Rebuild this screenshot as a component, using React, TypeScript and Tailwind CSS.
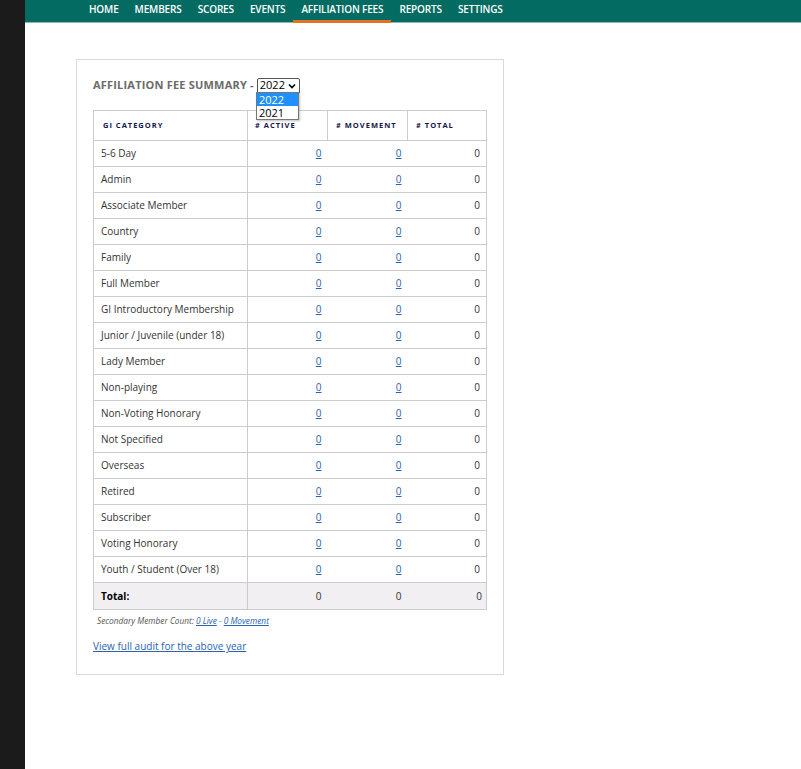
import React from "react";

const rows = [
  "5-6 Day",
  "Admin",
  "Associate Member",
  "Country",
  "Family",
  "Full Member",
  "GI Introductory Membership",
  "Junior / Juvenile (under 18)",
  "Lady Member",
  "Non-playing",
  "Non-Voting Honorary",
  "Not Specified",
  "Overseas",
  "Retired",
  "Subscriber",
  "Voting Honorary",
  "Youth / Student (Over 18)",
];

const nav = ["HOME", "MEMBERS", "SCORES", "EVENTS", "AFFILIATION FEES", "REPORTS", "SETTINGS"];

export default function App() {
  return (
    <div className="flex h-[769px] w-[801px] bg-white" style={{ fontFamily: '"Open Sans", sans-serif' }}>
      <div className="w-[25px] shrink-0 bg-[#1b1b1b]" />
      <div className="flex flex-1 flex-col">
        <div className="flex h-[23px] items-stretch bg-[#046b63] pl-[56px] border-b border-[#8fb9b4]">
          {nav.map((n) => (
            <div
              key={n}
              className="relative flex items-start px-[8px] pt-[2px] text-[10px] font-semibold tracking-[-0.15px] text-white"
            >
              {n}
              {n === "AFFILIATION FEES" && (
                <div className="absolute bottom-[-1px] left-0 right-0 h-[3px] bg-[#e3731e]" />
              )}
            </div>
          ))}
        </div>
        <div className="pl-[51px] pt-[36px]">
          <div className="w-[428px] border border-[#d9d9d9] px-[16px] pb-[20px] pt-[17px]">
            <div className="relative flex h-[17px] items-center">
              <span className="text-[11px] font-bold tracking-[0.2px] text-[#6b6b6b]">AFFILIATION FEE SUMMARY -</span>
              <div className="ml-[3px] flex h-[16px] w-[43px] items-center justify-between rounded-[2px] border border-[#555] bg-white pl-[2px] pr-[3px] text-[11px] text-black">
                <span>2022</span>
                <svg width="8" height="6" viewBox="0 0 8 6">
                  <path d="M1 1.5 L4 4.5 L7 1.5" stroke="#000" strokeWidth="1.6" fill="none" />
                </svg>
              </div>
              <div className="absolute left-[163px] top-[15px] z-10 w-[43px] border border-[#777] bg-white text-[11px] leading-[13px] text-black shadow-[1px_1px_2px_rgba(0,0,0,0.25)]">
                <div className="bg-[#1e90ff] pl-[2px] text-white">2022</div>
                <div className="pl-[2px]">2021</div>
              </div>
            </div>
            <table className="mt-[16px] w-[394px] border-collapse text-[10px] text-[#333]">
              <thead>
                <tr className="h-[30px] text-[7.5px] font-extrabold tracking-[1px] text-[#17174a]">
                  <th className="w-[154px] border border-[#ccc] pl-[9px] text-left">GI CATEGORY</th>
                  <th className="w-[80px] border border-[#ccc] pl-[7px] text-left"># ACTIVE</th>
                  <th className="w-[80px] border border-[#ccc] pl-[8px] text-left"># MOVEMENT</th>
                  <th className="border border-[#ccc] pl-[8px] text-left"># TOTAL</th>
                </tr>
              </thead>
              <tbody>
                {rows.map((r) => (
                  <tr key={r} className="h-[26px]">
                    <td className="border border-[#ccc] pl-[7px]">{r}</td>
                    <td className="border-y border-[#ccc] pr-[6px] text-right">
                      <span className="text-[#2a63b4] underline">0</span>
                    </td>
                    <td className="border-y border-[#ccc] pr-[6px] text-right">
                      <span className="text-[#2a63b4] underline">0</span>
                    </td>
                    <td className="border-y border-r border-[#ccc] pr-[6px] text-right">0</td>
                  </tr>
                ))}
                <tr className="h-[27px] bg-[#f1eff1]">
                  <td className="border border-[#ccc] pl-[7px] font-bold text-black">Total:</td>
                  <td className="border-y border-[#ccc] pr-[6px] text-right">0</td>
                  <td className="border-y border-[#ccc] pr-[6px] text-right">0</td>
                  <td className="border-y border-r border-[#ccc] pr-[4px] text-right">0</td>
                </tr>
              </tbody>
            </table>
            <div className="mt-[5px] pl-[4px] text-[8.3px] italic text-[#555]">
              Secondary Member Count: <span className="text-[#2a63b4] underline">0 Live</span> -{" "}
              <span className="text-[#2a63b4] underline">0 Movement</span>
            </div>
            <div className="mt-[12px] text-[10px] text-[#2a63b4] underline">View full audit for the above year</div>
          </div>
        </div>
      </div>
    </div>
  );
}
